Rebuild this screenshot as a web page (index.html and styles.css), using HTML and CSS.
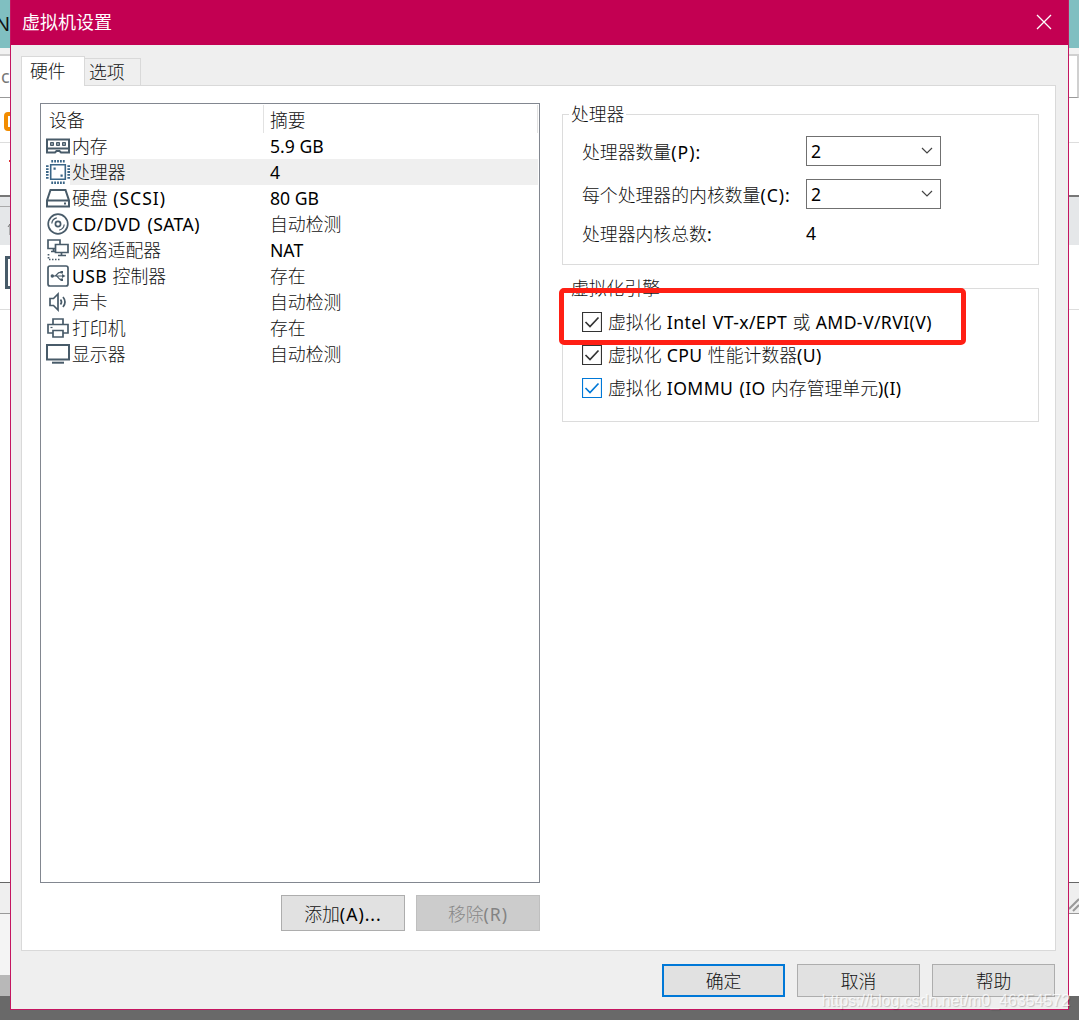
FILE: index.html
```html
<!DOCTYPE html>
<html lang="zh-CN">
<head>
<meta charset="utf-8">
<title>虚拟机设置</title>
<link rel="stylesheet" href="styles.css">
</head>
<body>
<div class="screen">
  <div class="behind left">
    <div class="teal"><span>N</span></div>
    <div class="chrome"></div>
    <div class="address"><span>c</span></div>
    <div class="bookmark"><i></i></div>
    <div class="tabs-row"><i></i></div>
    <div class="band"><svg width="10" height="49" viewBox="0 0 10 49"><path d="M0 9.500h10" stroke="#aaa"/><path d="M8 30l2-3v11" fill="none" stroke="#777"/></svg></div>
    <div class="box-row"><i></i></div>
    <div class="blank"></div>
    <div class="status"></div>
    <div class="pale"></div>
    <div class="gray"></div>
    <div class="dark"></div>
  </div>

  <main class="dialog">
    <header class="titlebar">
      <h1>虚拟机设置</h1>
      <svg class="close" width="16" height="16" viewBox="0 0 16 16"><path d="M1 1l14 14M15 1L1 15" stroke="#fff" stroke-width="1.300"/></svg>
    </header>
    <nav class="tabs"><div class="tab active">硬件</div><div class="tab">选项</div></nav>
    <section class="panel">
      <div class="devices">
        <div class="list">
          <div class="head"><span>设备</span><span>摘要</span></div>
          <div class="row"><svg viewBox="0 0 24 24"><path d="M1 5.500h22v9H1zM1 14.500v4h8l1.500-1.500h3l1.500 1.500h8v-4" class="s2"/><path d="M4.500 8.500h3v3h-3zM10.500 8.500h3v3h-3zM16.500 8.500h3v3h-3z" fill="#8795a0" stroke="#485b69"/></svg><span class="name">内存</span><span class="sum"><b>5.9 GB</b></span></div>
          <div class="row selected"><svg viewBox="0 0 24 24"><g fill="none" stroke="#3b6687"><path d="M4.700 4.700h14.600v14.600H4.700z" stroke-width="1.600"/><path d="M5.300 1.300h13.400M5.300 22.700h13.400M1.300 5.300v13.400M22.700 5.300v13.400" stroke-width="2.600" stroke-dasharray="1.800 1.100"/></g><path d="M7.500 7.500h2.200v2.200H7.500zM14.500 14.500h2.200v2.200h-2.200z" fill="#3b6687"/></svg><span class="name">处理器</span><span class="sum"><b>4</b></span></div>
          <div class="row"><svg viewBox="0 0 24 24"><path d="M4.500 4h15L23 14.500v6H1v-6zM1 14.500h22" class="s2"/><path d="M18 17.500h2" class="s2"/></svg><span class="name">硬盘 <b class="wide">(SCSI)</b></span><span class="sum"><b>80 GB</b></span></div>
          <div class="row"><svg viewBox="0 0 24 24"><circle cx="12" cy="12" r="9.800" class="s"/><circle cx="12" cy="12" r="2.600" class="s"/><path d="M5.800 11.500a6.300 6.300 0 0 1 5-5.600M18.200 12.500a6.300 6.300 0 0 1-5 5.600" class="s1"/></svg><span class="name"><b>CD/DVD (SATA)</b></span><span class="sum">自动检测</span></div>
          <div class="row"><svg viewBox="0 0 24 24"><path d="M9 10.500H2V2h12v4M5 13.500h4M7.500 10.500v3M9.500 6.500H22v8H9.500zM15.500 14.500v3M12 17.500h8" class="s"/><path d="M2.500 16v5.500H15" class="s" stroke-dasharray="1.500 1.500"/></svg><span class="name">网络适配器</span><span class="sum"><b>NAT</b></span></div>
          <div class="row"><svg viewBox="0 0 24 24"><rect x="2" y="2" width="20" height="20" rx="2" class="s"/><path d="M5.500 12H17M8.500 12c2.500 0 2.500-3.700 5.500-3.700h1M10 12c2.500 0 2.500 3.700 5 3.700h1" class="s1"/><path d="M16 10l3.500 2-3.500 2zM14.500 7h2.500v2.500h-2.500zM14.500 14.500H17V17h-2.500z" fill="#485b69"/><circle cx="6.300" cy="12" r="1.700" fill="#485b69"/></svg><span class="name"><b>USB</b> 控制器</span><span class="sum">存在</span></div>
          <div class="row"><svg viewBox="0 0 24 24"><path d="M4 8.500h3.500L12 4v16l-4.500-4.500H4z" class="s"/><path d="M14.500 9.500q2 2.500 0 5M17 7q4 5 0 10" class="s"/></svg><span class="name">声卡</span><span class="sum">自动检测</span></div>
          <div class="row"><svg viewBox="0 0 24 24"><path d="M7 8.500V3h10v5.500M7 17H2V8.500h20V17h-5M7 14.500h10V21H7z" class="s"/><path d="M4.500 11.500h2" class="s1"/></svg><span class="name">打印机</span><span class="sum">存在</span></div>
          <div class="row"><svg viewBox="0 0 24 24"><path d="M1 3h22v14.500H1z" class="s2"/><path d="M6 20.700h12" class="s2"/></svg><span class="name">显示器</span><span class="sum">自动检测</span></div>
        </div>
        <div class="list-actions"><button>添加<b class="wide">(A)...</b></button><button class="disabled">移除<b class="wide">(R)</b></button></div>
      </div>

      <div class="settings">
        <section class="group cpu">
          <h2>处理器</h2>
          <div class="field first"><label>处理器数量<b class="wide">(P):</b></label><div class="select"><b>2</b><svg width="12" height="8" viewBox="0 0 12 8"><path d="M1 1l5 5 5-5" fill="none" stroke="#444" stroke-width="1.200"/></svg></div></div>
          <div class="field second"><label>每个处理器的内核数量<b class="wide">(C):</b></label><div class="select"><b>2</b><svg width="12" height="8" viewBox="0 0 12 8"><path d="M1 1l5 5 5-5" fill="none" stroke="#444" stroke-width="1.200"/></svg></div></div>
          <div class="field total"><label>处理器内核总数<b class="wide">:</b></label><b>4</b></div>
        </section>
        <section class="group engine">
          <h2>虚拟化引擎</h2>
          <div class="checks">
            <div class="check"><svg viewBox="0 0 20 20"><path d="M.5.5h19v19H.5z"/><path class="tick" d="M3.500 10l4.500 4.500 8.500-9"/></svg><span>虚拟化 <b>Intel VT-x/EPT</b> 或 <b>AMD-V/RVI(V)</b></span></div>
            <div class="check"><svg viewBox="0 0 20 20"><path d="M.5.5h19v19H.5z"/><path class="tick" d="M3.500 10l4.500 4.500 8.500-9"/></svg><span>虚拟化 <b>CPU</b> 性能计数器<b>(U)</b></span></div>
            <div class="check focus"><svg viewBox="0 0 20 20"><path d="M.5.5h19v19H.5z"/><path class="tick" d="M3.500 10l4.500 4.500 8.500-9"/></svg><span>虚拟化 <b>IOMMU (IO</b> 内存管理单元<b>)(I)</b></span></div>
          </div>
          <div class="highlight"></div>
        </section>
      </div>
    </section>
    <footer class="actions"><button class="default">确定</button><button>取消</button><button>帮助</button></footer>
  </main>

  <div class="behind right">
    <div class="teal"></div>
    <div class="chrome"></div>
    <div class="address"></div>
    <div class="bookmark"></div>
    <div class="tabs-row"></div>
    <div class="band"></div>
    <div class="box-row"></div>
    <div class="blank"></div>
    <div class="status"><svg width="10" height="30" viewBox="0 0 10 30"><path d="M0 26L10 16M4 28l6-6" stroke="#999" stroke-width="2"/></svg></div>
    <div class="white"></div>
    <div class="dark"></div>
  </div>
</div>
<div class="watermark">https://blog.csdn.net/m0_46354572</div>
</body>
</html>
```
FILE: styles.css
```css
* { box-sizing: border-box; }
body {
  margin: 0;
  width: 1079px;
  height: 1020px;
  overflow: hidden;
  position: relative;
  background: #696969;
  color: #111;
  font: 300 17.85px/26px "Noto Sans CJK SC", sans-serif;
  white-space: nowrap;
}
b { font: 400 17.6px/24px "Noto Sans", "Noto Sans CJK SC", sans-serif; letter-spacing: .4px; color: #000; }
.wide { letter-spacing: 1px; }
h1, h2 { margin: 0; font-size: 17.8px; font-weight: 300; }
.screen { display: flex; height: 1010px; }

/* window visible on both sides of the dialog */
.behind { width: 10px; height: 1020px; display: flex; flex-direction: column; overflow: hidden; background: #fff; }
.behind > div { flex: none; overflow: hidden; }
.teal { height: 48px; background: #80bfc1; font: 20px/48px "Noto Sans", sans-serif; }
.teal span { margin-left: -5px; }
.chrome { height: 8px; background: #f2f2f2; border-bottom: 2px solid #d0d0d0; }
.address { height: 42px; border-bottom: 1px solid #999; color: #777; font: 18px/41px "Noto Sans", sans-serif; padding-left: 1px; }
.right .address { border-right: 2px solid #d0d0d0; }
.bookmark { height: 45px; border-bottom: 1px solid #ddd; padding: 14px 0 0 4px; }
.bookmark i { display: block; width: 15px; height: 19px; border: 4px solid #f28c00; border-radius: 4px; }
.tabs-row { height: 54px; border-bottom: 2px solid #777; padding: 17px 0 0 9px; }
.tabs-row i { display: block; width: 1px; height: 2px; background: #d33; }
.band { height: 48px; background: #e5e7e9; }
.box-row { height: 65px; border-bottom: 1px solid #ddd; padding: 11px 0 0 5px; }
.box-row i { display: block; width: 16px; height: 33px; border: 3px solid #485b69; }
.blank { height: 573px; border-bottom: 1px solid #666; }
.status { height: 31px; background: #efefef; border-bottom: 1px solid #999; }
.pale { height: 61px; background: #f4f4f4; }
.gray { height: 21px; background: #b8b8b8; }
.white { height: 82px; }
.dark { height: 24px; background: #696969; }

.dialog { width: 1059px; height: 1010px; border: 1px solid #c41660; border-top: 0; background: #efefef; }
.titlebar { height: 45px; padding: 0 16px 2px 11px; display: flex; align-items: center; justify-content: space-between; background: #c30052; color: #fff; }
.titlebar h1 { font-size: 18px; font-weight: 400; margin-top: -1px; }
.close { display: block; margin-top: 1px; }

.tabs { display: flex; align-items: flex-end; height: 40px; padding-left: 10px; }
.tab { height: 27px; width: 56px; border: 1px solid #d9d9d9; border-left: 0; border-bottom: 0; padding-left: 4px; line-height: 25px; }
.tab.active { height: 29px; width: 64px; border-left: 1px solid #d9d9d9; padding-left: 8px; line-height: 26px; background: #fff; }
.panel { width: 1035px; height: 866px; margin-left: 10px; padding: 18px 0 0 18px; display: flex; gap: 22px; border: 1px solid #d9d9d9; border-top: 0; background: linear-gradient(#d9d9d9, #d9d9d9) right top / 971px 1px no-repeat, #fff; }

.list { width: 500px; height: 780px; padding: 1px; border: 1px solid #828790; }
.head { display: flex; height: 28px; line-height: 28px; }
.head span:first-child { width: 222px; padding-left: 7px; border-right: 1px solid #e2e2e2; }
.head span:last-child { flex: 1; padding-left: 6px; border-right: 1px solid #e2e2e2; }
.row { display: flex; height: 26px; line-height: 24px; }
.row svg { width: 24px; height: 24px; margin: 1px 0 0 4px; flex: none; }
.name { width: 195px; padding-left: 2px; word-spacing: 1.5px; }
.sum { flex: 1; padding-left: 5px; }
.sum b { letter-spacing: 0; }
.selected .name, .selected .sum { background: #efefef; }
.s, .s1, .s2 { fill: none; stroke: #485b69; stroke-width: 1.700; }
.s1 { stroke-width: 1.200; }
.s2 { stroke-width: 2; }

button { display: block; margin: 0; padding: 0 0 2px; border: 1px solid #adadad; background: #e1e1e1; color: #111; font: inherit; }
.list-actions { display: flex; justify-content: flex-end; gap: 12px; margin-top: 12px; }
.list-actions button { width: 123px; height: 36px; padding-bottom: 1px; }
.list-actions button:first-child { width: 124px; }
.list-actions .disabled { width: 124px; margin-left: -1px; background: #ccc; border-color: #bfbfbf; color: #888; }
.disabled b { color: #838383; }

.group { position: relative; width: 477px; border: 1px solid #dcdcdc; }
.cpu { height: 151px; margin-top: 11px; }
.engine { height: 134px; margin-top: 23px; }
.group h2 { width: max-content; height: 26px; line-height: 22px; margin: -13px 0 0 6px; padding: 0 2px; background: #fff; }
.field { display: flex; align-items: center; padding-left: 19px; height: 30px; }
.field label { width: 224px; }
.first { margin-top: 8px; }
.second { margin-top: 13px; }
.total { margin-top: 9px; }
.select { width: 135px; height: 30px; padding: 0 7px 0 4px; display: flex; align-items: center; justify-content: space-between; border: 1px solid #707070; }
.checks { padding: 3px 0 0 19px; }
.check { display: flex; align-items: center; gap: 6px; height: 33px; word-spacing: 1.3px; }
.check span { margin-top: -1px; }
.check svg { width: 20px; height: 20px; fill: none; stroke: #333; stroke-width: 1.200; }
.check .tick { stroke-width: 1.700; }
.check.focus svg { stroke: #0078d7; }
.highlight { position: absolute; left: -4px; top: -1px; width: 407px; height: 57px; border: 5px solid #ff1f14; border-radius: 5px; }

.actions { display: flex; justify-content: flex-end; gap: 12px; padding: 13px 13px 0 0; }
.actions button { width: 123px; height: 33px; }
.actions .default { border: 2px solid #0078d7; }
.watermark { position: absolute; right: 9px; top: 990px; color: rgba(255, 255, 255, .75); text-shadow: 1px 1px 1px rgba(0, 0, 0, .2); font: 400 15.9px/22px "Liberation Sans", Arial, sans-serif; }
```
